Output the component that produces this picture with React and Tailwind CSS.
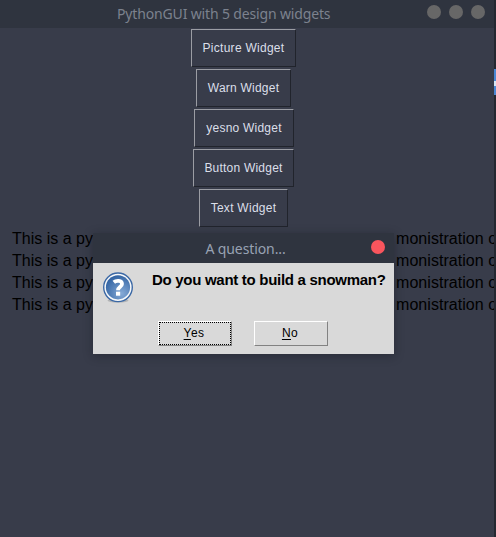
import React from "react";

const widgets = [
  { label: "Picture Widget", width: "w-[105px] ml-[191px]", text: "tracking-[0.27px]" },
  { label: "Warn Widget", width: "w-[95px] ml-[196px]", text: "tracking-[0.23px]" },
  { label: "yesno Widget", width: "w-[100px] ml-[194px]", text: "tracking-[0.23px]" },
  { label: "Button Widget", width: "w-[101px] ml-[193px]", text: "tracking-[0.22px]" },
  { label: "Text Widget", width: "w-[89px] ml-[199px]", text: "tracking-[0.27px]" },
];

const lines = [1, 2, 3, 4];

function QuestionIcon() {
  return (
    <svg width="32" height="32" viewBox="0 0 32 32" className="shrink-0">
      <defs>
        <radialGradient id="blue" cx="0.65" cy="0.75" r="0.75">
          <stop offset="0" stopColor="#86aad6" />
          <stop offset="1" stopColor="#3465a4" />
        </radialGradient>
      </defs>
      <ellipse cx="16" cy="28.5" rx="10.5" ry="2" fill="#8a8d92" opacity="0.5" />
      <circle cx="16" cy="15.3" r="14.3" fill="#f6f8fa" stroke="#3b68a5" strokeWidth="1.4" />
      <circle cx="16" cy="15.3" r="12.1" fill="url(#blue)" />
      <path d="M11.8 10.3C14 8.4 20 8 20 11.9C20 14.8 16 14.6 16 18.3" fill="none" stroke="#fff" strokeWidth="3.8" />
      <rect x="14" y="19.7" width="4.2" height="4" fill="#fff" />
    </svg>
  );
}

function Dialog() {
  return (
    <div className="absolute left-[93px] top-[233px] flex h-[121px] w-[301px] flex-col bg-[#d9d9d9] shadow-[0_2px_9px_rgba(20,22,30,0.4)]">
      <div className="relative flex h-[30px] shrink-0 items-center justify-center bg-[#2f343f] pl-[4px] font-['Noto_Sans',sans-serif] text-[14px] text-[#98a2b3]">
        <span className="whitespace-nowrap tracking-[-0.1px]">A question...</span>
        <span className="absolute right-[9px] top-[7px] size-[14px] rounded-full bg-[#f9555d]" />
      </div>
      <div className="flex h-[58px] items-start pl-[9px] pt-[9px]">
        <QuestionIcon />
        <span className="ml-[18px] -mt-px whitespace-nowrap text-[15px] font-bold leading-[17px] tracking-[-0.29px] text-black">
          Do you want to build a snowman?
        </span>
      </div>
      <div className="flex gap-[22px] pl-[65px] text-[12px] tracking-[0.4px] text-black">
        <button className="flex h-[25px] w-[74px] items-center justify-center border border-b-[#828282] border-l-white border-r-[#828282] border-t-white pb-px pr-[2px] outline-1 -outline-offset-2 outline-dotted outline-black">
          <span><span className="underline underline-offset-2">Y</span>es</span>
        </button>
        <button className="flex h-[25px] w-[74px] items-center justify-center border border-b-[#828282] border-l-white border-r-[#828282] border-t-white pb-px pr-[2px]">
          <span><span className="underline underline-offset-2">N</span>o</span>
        </button>
      </div>
    </div>
  );
}

export default function App() {
  return (
    <div className="relative flex h-[537px] w-[496px] overflow-hidden bg-[#242831] font-['Liberation_Sans',sans-serif]">
      <main className="flex h-full w-[494px] flex-col overflow-hidden bg-[#383c4a]">
        <header className="relative flex h-[28px] shrink-0 items-center bg-[#2f343f] pb-[2px] pl-[117px] font-['Noto_Sans',sans-serif] text-[14px] text-[#7c828e]">
          <span className="whitespace-nowrap tracking-[-0.15px]">PythonGUI with 5 design widgets</span>
          <div className="absolute right-[9px] top-[5px] flex gap-[8px]">
            <span className="size-[14px] rounded-full bg-[#676767]" />
            <span className="size-[14px] rounded-full bg-[#676767]" />
            <span className="size-[14px] rounded-full bg-[#676767]" />
          </div>
        </header>
        <section className="flex flex-col gap-[2px] pt-px">
          {widgets.map((w) => (
            <button
              key={w.label}
              className={`${w.width} ${w.text} flex h-[38px] shrink-0 items-center justify-center whitespace-nowrap border border-b-[#21242c] border-l-[#9b9da4] border-r-[#21242c] border-t-[#9b9da4] pb-px text-[12px] text-[#dbdfe9]`}
            >
              {w.label}
            </button>
          ))}
        </section>
        <section className="pt-px text-[16px] leading-[22px] text-black">
          {lines.map((n) => (
            <div key={n} className="flex h-[22px] whitespace-nowrap pl-[12px]">
              <span className="w-[384px] shrink-0">This is a py</span>
              <span className="tracking-[0.05px]">monistration o</span>
            </div>
          ))}
        </section>
      </main>
      <aside className="flex w-[2px] flex-col pt-[69px]">
        <span className="flex h-[26px] flex-col bg-[#4a87d3] pt-[12px]">
          <span className="h-[5px] bg-[#d5e6f5]" />
        </span>
      </aside>
      <Dialog />
    </div>
  );
}
